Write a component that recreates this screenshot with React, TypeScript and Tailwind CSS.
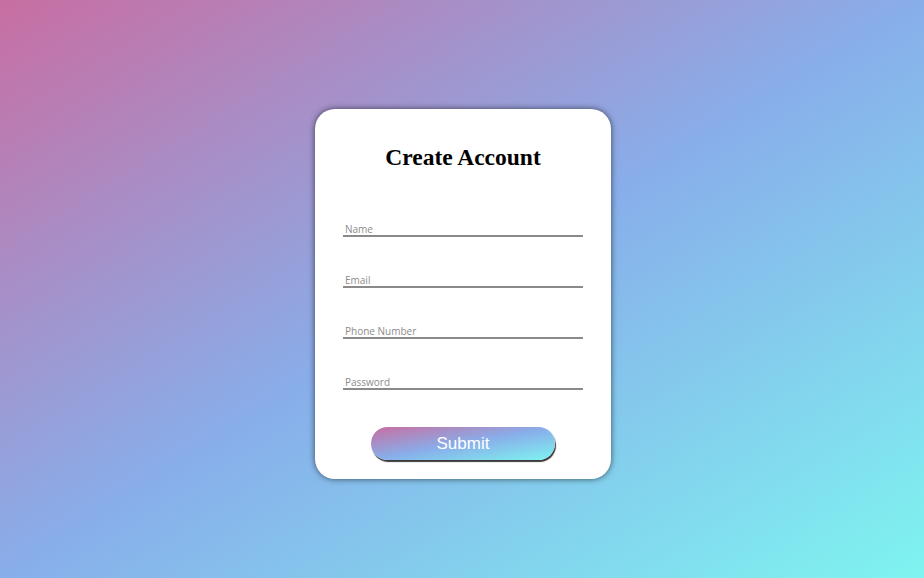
export default function App() {
  const fields = ['Name', 'Email', 'Phone Number', 'Password'];

  return (
    <div className="min-h-screen w-full flex items-center justify-center pt-[10px] pl-[2px] bg-[linear-gradient(to_bottom_right,#c86ea2,#88aeea_50%,#7ef4f0)]">
      <div className="w-[296px] h-[370px] bg-white rounded-[20px] shadow-[0_0_6px_rgba(0,0,0,0.6)] px-7 pt-[34px] flex flex-col">
        <h1 className="text-center text-[23.5px] leading-[28px] font-bold text-black font-['Liberation_Serif',serif]">
          Create Account
        </h1>
        <form className="mt-[44px] flex flex-col gap-[29px]" onSubmit={(e) => e.preventDefault()}>
          {fields.map((f) => (
            <input
              key={f}
              type={f === 'Password' ? 'password' : 'text'}
              placeholder={f}
              className="w-full h-[22px] pt-2 px-[2px] text-[10px] leading-[12px] font-['Open_Sans',sans-serif] border-b-2 border-[#8a8a8a] outline-none placeholder:text-[#8c8c8c]"
            />
          ))}
          <button
            type="submit"
            className="mt-[8px] mx-auto w-[184px] h-[33px] rounded-full text-white text-[17px] font-['Liberation_Sans',Arial,sans-serif] bg-[linear-gradient(to_bottom_right,#c86ea2,#88aeea_50%,#7ef4f0)] shadow-[1px_2px_1px_#3a3a3a]"
          >
            Submit
          </button>
        </form>
      </div>
    </div>
  );
}
